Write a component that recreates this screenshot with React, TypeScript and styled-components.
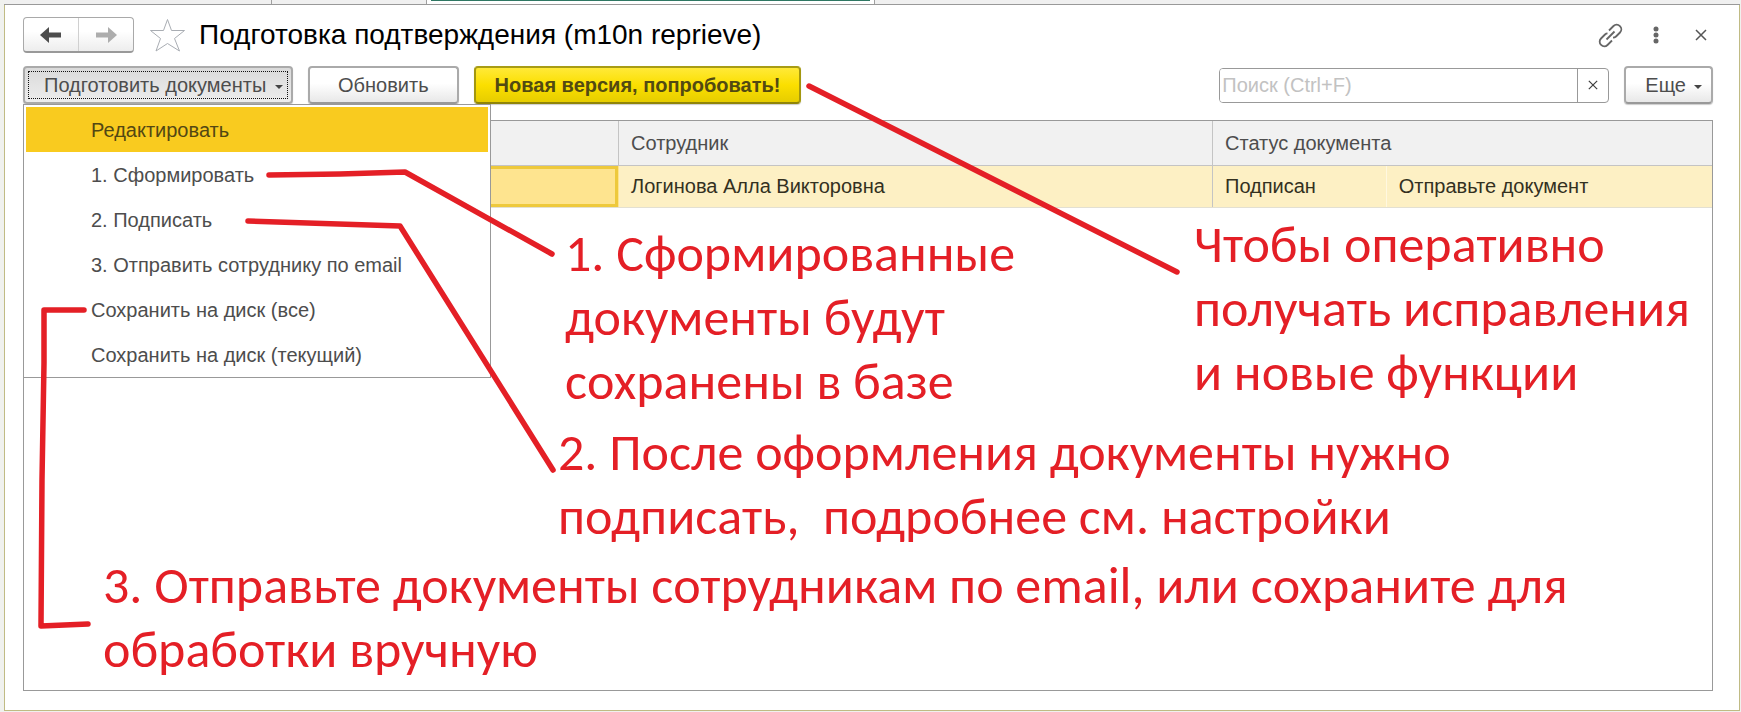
import React from "react";
import styled, { createGlobalStyle } from "styled-components";

const Global = createGlobalStyle`
  * { box-sizing: border-box; }
  body { margin: 0; background: #f0f1ee; }
  body, button, input, table { font: 20px/24px "Liberation Sans", Arial, sans-serif; color: #4d4d4d; }
  button { cursor: pointer; padding: 0; }
`;

const Screen = styled.div`
  position: relative;
  min-height: 100vh;
  display: flex;
  flex-direction: column;
  padding: 0 1px 1px 4px;
`;

const TabStrip = styled.nav`
  display: flex;
  height: 5px;
  background: #f0f0f0;
  border-bottom: 1px solid #999;
`;

const Tab = styled.div<{ $width: number; $active?: boolean }>`
  width: ${(p) => p.$width}px;
  padding: 0 4px;
  border-right: 1px solid #a0a0a0;
  background: ${(p) => (p.$active ? "#fff" : "#f0f0f0")};
  &::before {
    content: "";
    display: ${(p) => (p.$active ? "block" : "none")};
    height: 1px;
    background: #2f7763;
  }
`;

const Form = styled.main`
  flex: 1;
  display: flex;
  flex-direction: column;
  padding: 12px 26px 19px 18px;
  background: #fff;
  border: solid #c0bb84;
  border-width: 0 1px 1px;
`;

const Header = styled.header`
  display: flex;
  align-items: center;
  height: 36px;
`;

const History = styled.div`
  display: flex;
  width: 111px;
  height: 36px;
  border: 1px solid #a9a9a9;
  border-bottom: 2px solid #999;
  border-radius: 4px;
  background: linear-gradient(#fff 40%, #ededed);
`;

const HistoryButton = styled.button`
  flex: 1;
  display: grid;
  place-items: center;
  border: 0;
  background: none;
  & + & { border-left: 1px solid #d0d0d0; }
`;

const IconButton = styled.button`
  display: grid;
  place-items: center;
  border: 0;
  background: none;
`;

const Star = styled(IconButton)`
  margin: 0 14px 0 16px;
`;

const Title = styled.h1`
  flex: 1;
  margin: 0;
  font-size: 28px;
  line-height: 36px;
  font-weight: 400;
  color: #000;
`;

const WindowTools = styled.div`
  display: flex;
  align-items: center;
  gap: 20px;
  ${IconButton} { width: 25px; height: 32px; }
`;

const Toolbar = styled.div`
  display: flex;
  align-items: center;
  gap: 15px;
  margin: 13px 0 16px;
`;

const palette = {
  plain: "border-color: #aaa #aaa #999; background: linear-gradient(#fff 45%, #e8e8e8);",
  pressed: "border-color: #aaa; background: linear-gradient(#dadada, #ededed);",
  accent:
    "border-color: #a89c14 #a3970f #8f8408; background: linear-gradient(#ffe938, #fbdf00 50%, #e6cd00); color: #524a12; font-weight: 700;",
};

const CommandButton = styled.button<{ $look?: keyof typeof palette }>`
  display: flex;
  align-items: center;
  gap: 8px;
  height: 38px;
  padding: 0 19px;
  border: 2px solid;
  border-radius: 4px;
  box-shadow: 0 1px 1px #ccc;
  white-space: nowrap;
  ${(p) => palette[p.$look ?? "plain"]}
`;

const Caret = styled.span`
  margin-top: 3px;
  border: 4px solid transparent;
  border-top-color: #444;
  border-bottom: 0;
`;

const MenuAnchor = styled.div`
  position: relative;
  ${CommandButton} {
    width: 270px;
    padding: 0 8px 0 19px;
    justify-content: space-between;
    outline: 1px dotted #111;
    outline-offset: -6px;
  }
`;

const RefreshButton = styled(CommandButton)`
  padding: 0 28px;
`;

const MoreButton = styled(CommandButton)`
  padding: 0 9px 0 19px;
`;

const Menu = styled.div`
  position: absolute;
  z-index: 1;
  top: 38px;
  left: 0;
  width: 468px;
  padding: 2px 2px 0;
  border: 1px solid #999;
  background: #fff;
`;

const MenuItem = styled.button<{ $selected?: boolean }>`
  display: block;
  width: 100%;
  height: 45px;
  padding-left: 65px;
  border: 0;
  text-align: left;
  background: ${(p) => (p.$selected ? "#f9cb1f" : "#fff")};
  color: ${(p) => (p.$selected ? "#534713" : "#4d4d4d")};
`;

const Search = styled.div`
  display: flex;
  width: 390px;
  height: 35px;
  margin-left: auto;
  border: 1px solid #999;
  border-radius: 4px;
  overflow: hidden;
`;

const SearchInput = styled.input`
  flex: 1;
  min-width: 0;
  padding: 0 2px;
  border: 0;
  outline: 0;
  &::placeholder { color: #c2c2c2; opacity: 1; }
`;

const ClearButton = styled(IconButton)`
  width: 31px;
  border-left: 1px solid #999;
`;

const ListFrame = styled.section`
  flex: 1;
  border: 1px solid #999;
`;

const List = styled.table`
  width: 100%;
  table-layout: fixed;
  border-collapse: collapse;
`;

const Column = styled.col<{ $share?: number }>`
  width: ${(p) => (p.$share ? `${p.$share}%` : "auto")};
`;

const HeadCell = styled.th`
  height: 44px;
  padding: 0 12px;
  border-bottom: 1px solid #c4c4c4;
  background: #f1f1f1;
  font-weight: 400;
  text-align: left;
  & + & { border-left: 1px solid #c4c4c4; }
`;

const Cell = styled.td<{ $divider?: string; $current?: boolean }>`
  height: 42px;
  padding: 0 12px;
  border-left: 1px solid ${(p) => p.$divider ?? "transparent"};
  border-bottom: 1px solid #e3e0d2;
  background: ${(p) => (p.$current ? "#fee48f" : "#fdf0c4")};
  box-shadow: ${(p) => (p.$current ? "inset 0 0 0 3px #eec93c" : "none")};
  color: #33301f;
`;

/* Hand-drawn remarks lie on top of the form. */
const Marks = styled.svg`
  position: absolute;
  z-index: 2;
  top: 0;
  left: 0;
  pointer-events: none;
  fill: none;
  stroke: #e41f26;
  stroke-width: 5.5;
  stroke-linecap: round;
  stroke-linejoin: round;
`;

const Note = styled.p<{ $x: number; $y: number }>`
  position: absolute;
  z-index: 2;
  left: ${(p) => p.$x}px;
  top: ${(p) => p.$y}px;
  margin: 0;
  font: 52px/64px Carlito, Calibri, Lato, sans-serif;
  color: #e41f26;
  white-space: pre;
  pointer-events: none;
`;

const Arrow = ({ color, back }: { color: string; back?: boolean }) => (
  <svg width="22" height="18" viewBox="0 0 22 18" fill={color}>
    <path d={back ? "M0 9 9 1V6.5H21V11.5H9V17Z" : "M22 9 13 1V6.5H1V11.5H13V17Z"} />
  </svg>
);

const Cross = ({ size, color }: { size: number; color: string }) => (
  <svg width={size} height={size} viewBox="0 0 12 12" stroke={color} strokeWidth="1.5">
    <path d="M1 1 11 11M11 1 1 11" />
  </svg>
);

const menuItems = [
  "Редактировать",
  "1. Сформировать",
  "2. Подписать",
  "3. Отправить сотруднику по email",
  "Сохранить на диск (все)",
  "Сохранить на диск (текущий)",
];

const notes = [
  { x: 565, y: 221, text: "1. Сформированные\nдокументы будут\nсохранены в базе" },
  { x: 1194, y: 212, text: "Чтобы оперативно\nполучать исправления\nи новые функции" },
  { x: 558, y: 420, text: "2. После оформления документы нужно\nподписать,  подробнее см. настройки" },
  { x: 103, y: 553, text: "3. Отправьте документы сотрудникам по email, или сохраните для\nобработки вручную" },
];

export default function App() {
  return (
    <Screen>
      <Global />
      <TabStrip>
        <Tab $width={268} />
        <Tab $width={155} />
        <Tab $width={448} $active />
      </TabStrip>
      <Form>
        <Header>
          <History>
            <HistoryButton aria-label="Назад"><Arrow color="#4d4d4d" back /></HistoryButton>
            <HistoryButton aria-label="Вперед"><Arrow color="#adadad" /></HistoryButton>
          </History>
          <Star aria-label="В избранное">
            <svg width="35" height="34" viewBox="0 0 35 34" fill="#fff" stroke="#a9adb3">
              <path d="M17.5 1.5 21.5 12.5H34.5L24.5 20.5 29.5 33 17.5 25.5 6 33 10.5 20.5.5 12.5H13.5Z" />
            </svg>
          </Star>
          <Title>Подготовка подтверждения (m10n reprieve)</Title>
          <WindowTools>
            <IconButton aria-label="Ссылка">
              <svg width="25" height="25" viewBox="0 0 25 25" fill="none" stroke="#666" strokeWidth="1.8">
                <path d="M8.500 16.500 16.500 8.500M11 7.500 15.500 3C17.300 1.200 20 1.200 21.900 3.100S23.800 7.700 22 9.500L18 13.500C17.200 14.300 16.200 14.700 15 14.700M14 17.500 9.500 22C7.700 23.800 5 23.800 3.100 21.900S1.200 17.300 3 15.500L7 11.500C7.800 10.700 8.800 10.300 9.500 10.300" />
              </svg>
            </IconButton>
            <IconButton aria-label="Меню окна">
              <svg width="6" height="18" viewBox="0 0 6 18" fill="#666">
                <circle cx="3" cy="3" r="2.5" /><circle cx="3" cy="9" r="2.5" /><circle cx="3" cy="15" r="2.5" />
              </svg>
            </IconButton>
            <IconButton aria-label="Закрыть"><Cross size={12} color="#555" /></IconButton>
          </WindowTools>
        </Header>
        <Toolbar>
          <MenuAnchor>
            <CommandButton $look="pressed" aria-haspopup="menu" aria-expanded>
              Подготовить документы<Caret />
            </CommandButton>
            <Menu role="menu">
              {menuItems.map((item, i) => (
                <MenuItem key={item} role="menuitem" $selected={i === 0}>{item}</MenuItem>
              ))}
            </Menu>
          </MenuAnchor>
          <RefreshButton>Обновить</RefreshButton>
          <CommandButton $look="accent">Новая версия, попробовать!</CommandButton>
          <Search>
            <SearchInput placeholder="Поиск (Ctrl+F)" aria-label="Поиск" />
            <ClearButton aria-label="Очистить"><Cross size={10} color="#444" /></ClearButton>
          </Search>
          <MoreButton>Еще<Caret /></MoreButton>
        </Toolbar>
        <ListFrame>
          <List>
            <colgroup>
              <Column $share={35.2} />
              <Column $share={35.2} />
              <Column $share={10.3} />
              <Column />
            </colgroup>
            <thead>
              <tr>
                <HeadCell aria-label="Документ" />
                <HeadCell>Сотрудник</HeadCell>
                <HeadCell colSpan={2}>Статус документа</HeadCell>
              </tr>
            </thead>
            <tbody>
              <tr>
                <Cell $current />
                <Cell>Логинова Алла Викторовна</Cell>
                <Cell $divider="#c4c4c4">Подписан</Cell>
                <Cell $divider="#fff8e0">Отправьте документ</Cell>
              </tr>
            </tbody>
          </List>
        </ListFrame>
      </Form>
      <Marks width="1200" height="640" aria-hidden="true">
        <path d="M809 86 1177 272" />
        <path d="M269 175 340 174 405 172 552 254" />
        <path d="M248 221 400 226 553 470" />
        <path d="M84 310H44V363L42 480 41 626 88 624" />
      </Marks>
      {notes.map((n) => (
        <Note key={n.text} $x={n.x} $y={n.y}>{n.text}</Note>
      ))}
    </Screen>
  );
}
